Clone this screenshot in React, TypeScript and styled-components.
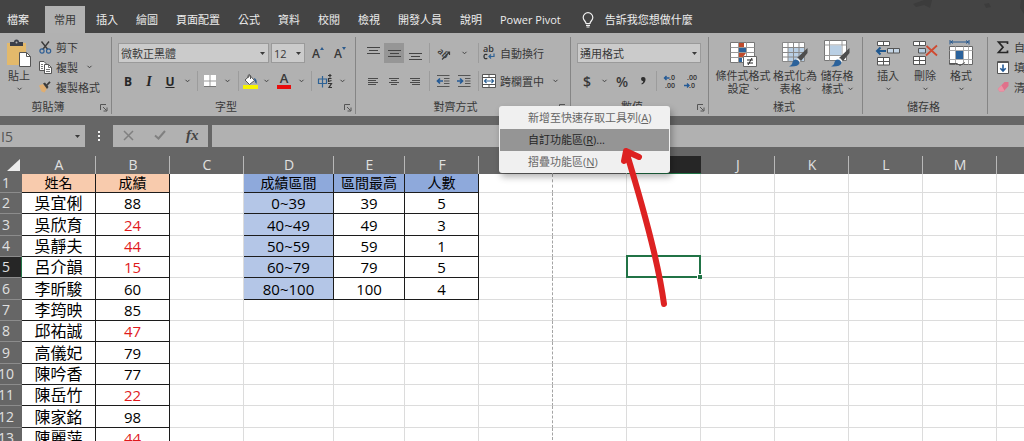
import React from "react";
import styled, { createGlobalStyle, css } from "styled-components";

const GlobalStyle = createGlobalStyle`
  *, *::before, *::after { box-sizing: border-box; }
  body { margin: 0; background: #fff; }
  button, input, select { font: inherit; color: inherit; margin: 0; padding: 0; border: 0; background: none; border-radius: 0; }
  body, button, input, select { font-family: "Open Sans", "Noto Sans CJK TC", sans-serif; }
  svg { display: block; flex: none; overflow: visible; }
`;

const GREEN = "#217346";

const Page = styled.div`
  height: 100vh;
  display: flex;
  flex-direction: column;
  overflow: hidden;
  position: relative;
  color: #383838;
  font-size: 11px;
  line-height: 13px;
`;

/* ---------- tab strip ---------- */
const TabStrip = styled.nav`
  flex: none;
  height: 33px;
  padding-top: 6px;
  background: #444;
  color: #ececec;
  display: flex;
  overflow: hidden;
`;
const Tab = styled.button<{ $active?: boolean }>`
  flex: none;
  height: 27px;
  padding: 0 9px;
  white-space: nowrap;
  ${(p) => p.$active && css`background: #b2b2b2; color: #383838; margin-right: 2px;`}
`;
const FileTab = styled(Tab)`
  padding: 0 16px 0 7px;
`;
const TellMe = styled.button`
  flex: none;
  display: flex;
  align-items: center;
  gap: 11px;
  margin-left: 12px;
  white-space: nowrap;
`;
const Doodle = styled.svg`
  margin: -6px 0 0 auto;
`;

/* ---------- ribbon ---------- */
const Ribbon = styled.div`
  flex: none;
  display: flex;
  padding: 4px 0 2px;
  background: #b1b1b1;
  overflow: hidden;
`;
const Group = styled.section<{ $w: number }>`
  flex: none;
  width: ${(p) => p.$w}px;
  border-right: 1px solid #858585;
`;
const GroupBody = styled.div<{ $left?: number }>`
  height: 62px;
  padding-left: ${(p) => p.$left ?? 0}px;
  display: flex;
`;
const Stack = styled(GroupBody)`
  flex-direction: column;
  padding-top: 6px;
  gap: 8px;
`;
const GroupFoot = styled.div`
  height: 15px;
  display: flex;
  align-items: center;
  padding-right: 3px;
`;
const GroupLabel = styled.span<{ $launch?: boolean }>`
  flex: 1;
  text-align: center;
  line-height: 15px;
  padding-right: ${(p) => (p.$launch ? 4 : 0)}px;
`;
const Launcher = styled.button`
  width: 8px;
  padding-top: 2px;
`;
const Row = styled.div`
  display: flex;
  align-items: center;
  height: 20px;
`;
const Tool = styled.button<{ $w: number; $on?: boolean }>`
  flex: none;
  width: ${(p) => p.$w}px;
  height: 20px;
  display: flex;
  align-items: center;
  justify-content: center;
  ${(p) => p.$on && css`background: #969696;`}
`;
const Letter = styled(Tool)<{ $italic?: boolean; $underline?: boolean }>`
  color: #262626;
  font-size: ${(p) => (p.$italic ? 14 : 12)}px;
  font-weight: 700;
  font-style: ${(p) => (p.$italic ? "italic" : "normal")};
  font-family: ${(p) => (p.$italic ? '"Liberation Serif", serif' : '"Open Sans", sans-serif')};
  text-decoration: ${(p) => (p.$underline ? "underline" : "none")};
`;
const Sign = styled(Tool)`
  font-size: 14px;
  font-weight: 600;
`;
const Divider = styled.span`
  flex: none;
  width: 1px;
  height: 20px;
  margin: 0 3px;
  background: #9c9c9c;
`;
const LabelTool = styled.button`
  flex: none;
  height: 20px;
  display: flex;
  align-items: center;
  gap: 4px;
  white-space: nowrap;
`;
const IconSlot = styled.span`
  width: 14px;
  display: flex;
  justify-content: center;
`;
const SmallColumn = styled.div`
  display: flex;
  flex-direction: column;
  align-items: flex-start;
`;
const BigTool = styled.button<{ $w: number }>`
  flex: none;
  width: ${(p) => p.$w}px;
  height: 60px;
  padding-top: 3px;
  display: flex;
  flex-direction: column;
  align-items: center;
  white-space: nowrap;
  & > svg { margin-bottom: 1px; }
`;
const BigLine = styled.span`
  height: 13px;
  display: flex;
  align-items: center;
  gap: 4px;
`;
const SelectBox = styled.span<{ $w: number }>`
  flex: none;
  width: ${(p) => p.$w}px;
  height: 20px;
  border: 1px solid #9a9a9a;
  background: #cbcbcb;
  display: grid;
  align-items: center;
  & > * { grid-area: 1 / 1; }
  & > svg { justify-self: end; margin-right: 3px; pointer-events: none; }
`;
const Select = styled.select`
  appearance: none;
  width: 100%;
  height: 18px;
  padding-left: 2px;
`;
const BoxRow = styled(Row)`
  gap: 2px;
`;

/* ---------- formula bar ---------- */
const FormulaBar = styled.div`
  flex: none;
  height: 32px;
  padding: 9px 0 1px;
  background: #666;
  display: flex;
`;
const NameBox = styled.div`
  flex: none;
  width: 85px;
  height: 22px;
  background: #b1b1b1;
  display: flex;
  align-items: center;
  justify-content: space-between;
  padding: 0 5px 0 1px;
`;
const NameInput = styled.input`
  width: 60px;
  font-size: 14px;
  color: #555;
`;
const Dots = styled.span`
  flex: none;
  width: 28px;
  display: flex;
  align-items: center;
  justify-content: center;
`;
const FormulaTools = styled.div`
  flex: none;
  width: 95px;
  height: 22px;
  margin-right: 4px;
  background: #b1b1b1;
  display: flex;
  justify-content: space-around;
`;
const FxTool = styled(Tool)`
  font: italic 700 15px "Liberation Serif", serif;
  color: #444;
`;
const FormulaInput = styled.input`
  flex: 1;
  min-width: 0;
  height: 22px;
  background: #b1b1b1;
`;

/* ---------- worksheet ---------- */
const Sheet = styled.div`
  flex: 1;
  min-height: 0;
  overflow: hidden;
`;
const Grid = styled.table`
  table-layout: fixed;
  width: 1072px;
  border-collapse: separate;
  border-spacing: 0;
  color: #000;
  font-size: 15px;
  line-height: 18px;
  text-align: center;
`;
const BodyRow = styled.tr`
  height: 21px;
  &:first-child { height: 18px; }
  &:nth-child(3n + 3) { height: 22px; }
`;
const ColHead = styled.th<{ $sel?: boolean }>`
  height: 26px;
  padding: 7px 0 0;
  background: #666;
  color: #e0e0e0;
  font-size: 14px;
  font-weight: 400;
  background-image: linear-gradient(#b8b8b8, #b8b8b8);
  background-size: 1px 18px;
  background-position: right bottom;
  background-repeat: no-repeat;
  ${(p) => p.$sel && css`
    background-image: linear-gradient(#262626, #262626);
    background-size: 100% 18px;
    box-shadow: inset 0 -1px ${GREEN};
  `}
`;
const Corner = styled.td`
  background: #666;
  padding: 0 2px 3px 7px;
  vertical-align: bottom;
`;
const RowHead = styled.th<{ $sel?: boolean }>`
  padding: 0 9px 0 0;
  background: ${(p) => (p.$sel ? "#262626" : "#666")};
  color: #e0e0e0;
  font-size: 14px;
  font-weight: 400;
  border-bottom: 1px solid #8c8c8c;
  border-right: 1px solid ${(p) => (p.$sel ? GREEN : "#666")};
  & > span { display: flex; justify-content: center; width: 12px; }
`;
type CellKind = "plain" | "box" | "name" | "fail" | "peach" | "blue" | "range";
const fills: Partial<Record<CellKind, string>> = { peach: "#f8cbad", blue: "#8ea9db", range: "#b4c6e7" };
const Cell = styled.td<{ $kind: CellKind; $dash?: boolean; $active?: boolean }>`
  padding: 0;
  white-space: nowrap;
  font-weight: 500;
  border-right: 1px ${(p) => (p.$dash ? "dashed #a4a4a4" : p.$kind === "plain" ? "solid #dcdcdc" : "solid #1c1c1c")};
  border-bottom: 1px solid ${(p) => (p.$kind === "plain" ? "#dcdcdc" : "#1c1c1c")};
  background: ${(p) => fills[p.$kind] ?? "#fff"};
  color: ${(p) => (p.$kind === "fail" ? "#e0191c" : "#000")};
  ${(p) => (p.$kind === "peach" || p.$kind === "blue") && css`font-size: 14px; line-height: 16px; font-weight: 400;`}
  ${(p) => p.$kind === "name" && css`font-size: 16px; font-weight: 400;`}
  ${(p) => p.$active && css`
    position: relative;
    &::before { content: ""; position: absolute; inset: -2px -1px -1px -1px; border: 2px solid ${GREEN}; }
    &::after { content: ""; position: absolute; right: -2px; bottom: -2px; width: 5px; height: 5px; background: ${GREEN}; border: solid #fff; border-width: 1px 0 0 1px; }
  `}
`;

/* ---------- context menu ---------- */
const Menu = styled.div`
  position: absolute;
  left: 499px;
  top: 106px;
  width: 171px;
  padding: 1px 1px 0;
  background: #f0f0f0;
  border-radius: 3px;
  box-shadow: 2px 4px 7px rgba(0, 0, 0, 0.3);
`;
const MenuItem = styled.button<{ $hot?: boolean }>`
  display: block;
  width: 100%;
  height: 22px;
  padding: 0 0 1px 28px;
  text-align: left;
  white-space: nowrap;
  color: ${(p) => (p.$hot ? "#262626" : "#666")};
  background: ${(p) => (p.$hot ? "#959595" : "transparent")};
`;
const Pointer = styled.svg`
  position: absolute;
  left: 616px;
  top: 142px;
`;

/* ---------- icons ---------- */
const Chevron = () => (
  <svg width="5" height="4" viewBox="0 0 5 4"><path d="M.5 .8 2.5 2.8 4.5 .8" fill="none" stroke="#444" /></svg>
);
const Triangle = () => (
  <svg width="5" height="3" viewBox="0 0 5 3"><path d="M0 0H5L2.5 3Z" fill="#3a3a3a" /></svg>
);
const Launch = () => (
  <svg width="8" height="8" viewBox="0 0 8 8" fill="none" stroke="#555"><path d="M.5 6V.5H6M3 3 6.5 6.5M7 3.5V7H3.5" /></svg>
);
const Bulb = () => (
  <svg width="12" height="16" viewBox="0 0 12 16" fill="none" stroke="#f0f0f0" strokeWidth="1.2">
    <path d="M4 11.5C4 9.300 1.200 8.500 1.200 5.500A4.700 4.700 0 0 1 10.800 5.500C10.800 8.500 8 9.300 8 11.500ZM4 13.300H8M4.500 15H7.500" />
  </svg>
);
const PasteIcon = () => (
  <svg width="26" height="28" viewBox="0 0 26 28">
    <rect x="1" y="3" width="19" height="22" fill="#e3b96b" />
    <path d="M4 6V2H8A2.500 2.500 0 0 1 13 2H17V6Z" fill="#3b3f4a" />
    <circle cx="10.500" cy="2.500" r="1" fill="#b1b1b1" />
    <path d="M13.500 12.500H20.500L24.500 16.500V26.500H13.500Z" fill="#fff" stroke="#555" />
    <path d="M20.500 12.500V16.500H24.500" fill="none" stroke="#555" />
  </svg>
);
const CutIcon = () => (
  <svg width="13" height="13" viewBox="0 0 13 13" fill="none">
    <path d="M2.500 .5 8.800 8.500M10 .5 3.700 8.500" stroke="#3b3b3b" strokeWidth="1.400" />
    <circle cx="3" cy="10" r="2.100" stroke="#2f5f95" strokeWidth="1.200" /><circle cx="9.600" cy="10" r="2.100" stroke="#2f5f95" strokeWidth="1.200" />
  </svg>
);
const CopyIcon = () => (
  <svg width="13" height="13" viewBox="0 0 13 13" fill="#fff" stroke="#555">
    <path d="M.5 .5H5L7.500 3V9.500H.5Z" /><path d="M5.500 3.500H9.500L12.500 6.500V12.500H5.500Z" />
    <path d="M9.500 3.500V6.500H12.500M7 8.500H11M7 10.500H11M2 3.500H4M2 5.500H4M2 7.500H4" fill="none" strokeWidth=".8" />
  </svg>
);
const PainterIcon = () => (
  <svg width="12" height="12" viewBox="0 0 12 12">
    <path d="M0 4.500 4 3 8 7.500 5.500 11.500 2.500 10.500Z" fill="#dfae72" />
    <path d="M4 2.500 6 1.500 9.500 6 8 8Z" fill="#3b3b3b" /><path d="M7.500 4.500 11 .8" stroke="#3b3b3b" strokeWidth="1.800" />
  </svg>
);
const BordersIcon = () => (
  <svg width="12" height="12" viewBox="0 0 12 12"><path d="M0 0H12V12H0Z" fill="#fff" /><path d="M6 0V12M0 6H12" stroke="#999" /><path d="M0 11.500H12" stroke="#777" /></svg>
);
const FillIcon = () => (
  <svg width="15" height="15" viewBox="0 0 15 15">
    <path d="M2 6 7 1.500 11.500 6.500 6.500 10.500Z" fill="#fff" stroke="#555" /><path d="M5 4V1.500Q6.500-.5 7.500 1.500V5" fill="none" stroke="#555" />
    <path d="M11 4Q14.500 5 13.500 10 12 8.500 11.500 6.500Z" fill="#2d5b8c" /><rect y="11" width="15" height="4" fill="#f8f400" />
  </svg>
);
const FontColorMark = styled.span`
  width: 14px;
  height: 16px;
  border-bottom: 4px solid #e80c0c;
  font-size: 13px;
  font-weight: 600;
  line-height: 11px;
`;
const SizeMark = styled.span`
  font-size: 12px;
  font-weight: 600;
  display: flex;
  align-items: center;
  & > svg { margin-top: -10px; }
`;
const Caret = ({ down }: { down?: boolean }) => (
  <svg width="4" height="3" viewBox="0 0 4 3"><path d={down ? "M0 0H4L2 3Z" : "M0 3H4L2 0Z"} fill="#2d5b8c" /></svg>
);
const PhoneticIcon = () => (
  <svg width="15" height="15" viewBox="0 0 15 15" fill="none">
    <path d="M.5 5H8.500V9.500H.5ZM4.500 2V13.500" stroke="#2d6296" strokeWidth="1.200" />
    <path d="M10 1.500H13.500M12 0V3.500M10 4.500H13.500M10.500 4V7.500L13.500 6.500M10 9.500H13.500L11 13.500H14" stroke="#333" strokeWidth="1.200" />
  </svg>
);
const insets = [0, 2, 0, 2];
const ParaIcon = ({ kind }: { kind: "left" | "center" | "right" }) => (
  <svg width="12" height="9" viewBox="0 0 12 9" stroke="#4a4a4a">
    {insets.map((inset, i) => {
      const from = kind === "left" ? 1 : 1 + inset;
      const to = kind === "right" ? 11 : 11 - inset;
      return <path key={i} d={`M${from} ${i * 2 + 1.5}H${to}`} />;
    })}
  </svg>
);
const VAlignIcon = ({ y }: { y: number }) => (
  <svg width="13" height="18" viewBox="0 0 13 18" stroke="#444"><path d={`M0 ${y + 0.5}H13M2 ${y + 3.5}H11M0 ${y + 6.5}H13`} /></svg>
);
const RotateIcon = () => (
  <svg width="15" height="14" viewBox="0 0 15 14" fill="none" stroke="#3a3a3a">
    <text x="1" y="6" fontSize="9" fontWeight="600" stroke="none" fill="#3a3a3a" transform="rotate(42 1 6)">ab</text>
    <path d="M6 13.500 13.500 6M13.500 9V6H10.500" strokeWidth="1.200" />
  </svg>
);
const WrapIcon = () => (
  <svg width="12" height="14" viewBox="0 0 12 14" fill="none">
    <text x="0" y="6" fontSize="9" fontWeight="600" fill="#333">ab</text>
    <path d="M4.300 8.700Q1 7.500 1 10.500T4.300 12.400" stroke="#333" strokeWidth="1.300" />
    <path d="M11 7.500V10.500H6M8 8.500 6 10.500 8 12.500" stroke="#2d6296" strokeWidth="1.200" />
  </svg>
);
const MergeIcon = () => (
  <svg width="14" height="14" viewBox="0 0 14 14"><path d="M.5 .5H13.500V13.500H.5ZM.5 3.500H13.500M.5 10.500H13.500M7 .5V3.500M7 10.500V13.500" fill="#fff" stroke="#555" /><path d="M2.500 7H11.500M4.500 5 2.500 7 4.500 9M9.500 5 11.500 7 9.500 9" fill="none" stroke="#2d6296" strokeWidth="1.200" /></svg>
);
const IndentIcon = ({ out }: { out?: boolean }) => (
  <svg width="14" height="12" viewBox="0 0 14 12" fill="none">
    <path d="M1 .5H13.500M8 3.500H13.500M8 6H13.500M8 8.500H13.500M1 11.500H13.500" stroke="#555" />
    <path d={out ? "M7 6H1.500M4 3.500 1.500 6 4 8.500" : "M0 6H5.500M3 3.500 5.500 6 3 8.500"} stroke="#245a96" strokeWidth="1.700" />
  </svg>
);
const DecimalIcon = ({ more }: { more?: boolean }) => (
  <svg width="12" height="13" viewBox="0 0 12 13">
    <text x={more ? 5 : 3} y="5" fontSize="7" fontWeight="600" fill="#333">{more ? ".0" : ".00"}</text>
    <text x={more ? 1 : 5} y="13" fontSize="7" fontWeight="600" fill="#333">{more ? ".00" : ".0"}</text>
    <path d={more ? "M5.500 3H.5M2.500 1 .5 3 2.500 5" : "M0 10.500H5M3 8.500 5 10.500 3 12.500"} fill="none" stroke="#245a96" strokeWidth="1.400" />
  </svg>
);
const CommaIcon = () => (
  <svg width="5" height="8" viewBox="0 0 5 8"><path d="M0 2A2 2 0 0 1 2.200 0Q4.800 .2 4.500 3 4 6.300 .8 7.500L.4 6.600Q2 5.800 2.300 4.200 0 4 0 2Z" fill="#2e2e2e" /></svg>
);
const CondIcon = () => (
  <svg width="28" height="28" viewBox="0 0 28 28">
    <path d="M1.500 2.500H25.500V22.500H1.500Z" fill="#fff" stroke="#777" /><path d="M1.500 7.500H25.500M1.500 12.500H25.500M1.500 17.500H25.500M9.500 2.500V22.500M17.500 2.500V22.500" stroke="#999" />
    <path d="M10 3H15V7H10ZM10 13H17L14 17H10Z" fill="#bf4b2c" /><path d="M10 8H17V12H10ZM10 18H13V22H10Z" fill="#2b629b" />
    <path d="M14.500 16.500H27.500V26.500H14.500Z" fill="#fff" stroke="#666" /><path d="M18 20H24M18 23H24M23 18 19 25" stroke="#222" />
  </svg>
);
const Brush = () => (
  <>
    <path d="M26.500 8 26.500 13 20 21 16 18Z" fill="#4d4d4d" /><path d="M17 18 19.500 21 18 22.500 14.500 20Z" fill="#eee" />
    <path d="M14 19.500Q18 19.500 18.500 23 17.500 27 8 26.500 11.500 24.500 11.500 22 12 20 14 19.500Z" fill="#2b629b" />
  </>
);
const TableStyleIcon = () => (
  <svg width="28" height="28" viewBox="0 0 28 28">
    <path d="M1.500 2.500H23.500V21.500H1.500Z" fill="#fff" /><path d="M7 7.500H23.500V21.500H7Z" fill="#b9cfe4" />
    <path d="M1.500 2.500H23.500V21.500H1.500ZM1.500 7.500H23.500M1.500 12.500H23.500M1.500 17H23.500M7 2.500V21.500M12.500 2.500V21.500M18 2.500V21.500" fill="none" stroke="#888" /><Brush />
  </svg>
);
const CellStyleIcon = () => (
  <svg width="28" height="28" viewBox="0 0 28 28">
    <path d="M1.500 .5H23.500V20.500H1.500Z" fill="#fff" stroke="#777" /><path d="M6.500 .5V20.500M19 .5V20.500M1.500 5H23.500M1.500 15.500H23.500" stroke="#999" />
    <path d="M7 5.500H18.500V15H7Z" fill="#b9cfe4" /><Brush />
  </svg>
);
const InsertIcon = () => (
  <svg width="26" height="28" viewBox="0 0 26 28" stroke="#555">
    <path d="M2.500 1.500H14.500V5.500H2.500ZM8.500 1.500V5.500M2.500 17.500H14.500V25H2.500ZM8.500 17.500V25M2.500 21.500H14.500" fill="#fff" /><path d="M12.500 8.500H24.500V13H12.500ZM18.500 8.500V13" fill="#c5d6e6" />
    <path d="M11 11H2M5.500 7.500 2 11 5.500 14.500" fill="none" stroke="#1f5890" strokeWidth="2" />
  </svg>
);
const DeleteIcon = () => (
  <svg width="26" height="28" viewBox="0 0 26 28" stroke="#555">
    <path d="M1.500 1.500H13.500V5.500H1.500ZM7.500 1.500V5.500M1.500 16.500H13.500V24.500H1.500ZM7.500 16.500V24.500M1.500 20.500H13.500" fill="#fff" /><path d="M6.500 8.500H13.500V13H6.500Z" fill="#b9cfe4" />
    <path d="M14.500 6 25 15.500M25 5.500 14 15.500" fill="none" stroke="#cf4a31" strokeWidth="1.800" />
  </svg>
);
const FormatIcon = () => (
  <svg width="26" height="28" viewBox="0 0 26 28">
    <path d="M2 2H21M2 0V4.500M21 0V4.500M5 .5 3 2 5 3.500M18 .5 20 2 18 3.500" fill="none" stroke="#24578d" />
    <path d="M1.500 6.500H24.500V24.500H1.500Z" fill="#fff" stroke="#666" /><path d="M1.500 10.500H24.500M1.500 19.500H24.500M7.500 6.500V24.500M15.500 6.500V24.500M20.500 6.500V24.500" stroke="#aaa" />
    <path d="M8 11H15V19H8Z" fill="#2b629b" /><path d="M1 23.500H9L12 25.500 17 22.500" fill="none" stroke="#555" />
  </svg>
);
const SumIcon = () => (
  <svg width="12" height="13" viewBox="0 0 12 13"><path d="M10.500 3V1H1.500L6 6.300 1.500 11.500H10.500V9.500" fill="none" stroke="#262626" strokeWidth="1.700" /></svg>
);
const FillDownIcon = () => (
  <svg width="12" height="13" viewBox="0 0 12 13"><path d="M.5 .5H11.500V12.500H.5Z" fill="#fff" stroke="#555" /><path d="M0 1.500H12" stroke="#555" /><path d="M6 3.500V10M3.300 7.300 6 10 8.700 7.300" fill="none" stroke="#245a96" strokeWidth="1.600" /></svg>
);
const EraserIcon = () => (
  <svg width="12" height="12" viewBox="0 0 12 12"><path d="M7.500 1H11.500V5L6.500 10.500H2.500L.8 8Z" fill="#e0708a" /><path d="M.8 8 4.500 4.300 7.500 9.500 6.500 10.500H2.500Z" fill="#ea93a5" /></svg>
);

/* ---------- data ---------- */
const tabsBefore = ["插入", "繪圖", "頁面配置", "公式", "資料", "校閱", "檢視", "開發人員", "說明", "Power Pivot"];
const columns = ["A", "B", "C", "D", "E", "F", "G", "H", "I", "J", "K", "L", "M", "N"];
const columnWidths = [74, 74, 74, 90, 71, 74, 74, 74, 74, 74, 74, 74, 74, 75];
const students: [string, number][] = [
  ["吳宜俐", 88], ["吳欣育", 24], ["吳靜夫", 44], ["呂介韻", 15], ["李昕駿", 60], ["李筠映", 85],
  ["邱祐誠", 47], ["高儀妃", 79], ["陳吟香", 77], ["陳岳竹", 22], ["陳家銘", 98], ["陳麗萍", 44],
];
const bands = [["0~39", "39", "5"], ["40~49", "49", "3"], ["50~59", "59", "1"], ["60~79", "79", "5"], ["80~100", "100", "4"]];

function cellAt(row: number, col: number): { kind: CellKind; text?: string | number } {
  if (row === 1) {
    if (col < 2) return { kind: "peach", text: ["姓名", "成績"][col] };
    if (col > 2 && col < 6) return { kind: "blue", text: ["成績區間", "區間最高", "人數"][col - 3] };
    return { kind: "plain" };
  }
  const student = students[row - 2];
  if (col === 0) return { kind: "name", text: student[0] };
  if (col === 1) return { kind: student[1] < 60 ? "fail" : "box", text: student[1] };
  if (col > 2 && col < 6 && row < 7) return { kind: col === 3 ? "range" : "box", text: bands[row - 2][col - 3] };
  return { kind: "plain" };
}

const More = ({ w, label }: { w: number; label: string }) => (
  <Tool $w={w} aria-label={label}><Chevron /></Tool>
);
const Foot = ({ label, launch }: { label: string; launch?: boolean }) => (
  <GroupFoot>
    <GroupLabel $launch={launch}>{label}</GroupLabel>
    {launch && <Launcher aria-label={`${label}設定`}><Launch /></Launcher>}
  </GroupFoot>
);
const Big = ({ w, icon, lines }: { w: number; icon: React.ReactNode; lines: [string, string] }) => (
  <BigTool $w={w}>
    {icon}
    <BigLine>{lines[0]}</BigLine>
    <BigLine>{lines[1]}<Chevron /></BigLine>
  </BigTool>
);
const MoreSlot = styled.span`
  padding-left: 5px;
`;
const Labelled = ({ icon, text, more }: { icon: React.ReactNode; text: string; more?: boolean }) => (
  <LabelTool><IconSlot>{icon}</IconSlot>{text}{more && <MoreSlot><Chevron /></MoreSlot>}</LabelTool>
);

export default function App() {
  return (
    <Page>
      <GlobalStyle />
      <TabStrip>
        <FileTab>檔案</FileTab>
        <Tab $active>常用</Tab>
        {tabsBefore.map((t) => <Tab key={t}>{t}</Tab>)}
        <TellMe><Bulb />告訴我您想做什麼</TellMe>
        <Doodle width="120" height="14" viewBox="0 0 120 14" fill="#3c3c3c">
          <path d="M9 4 20 0H28L26 8 20 5 12 7ZM80 4 85 3 87 7 82 8ZM117 0H120V14L116 8Z" />
        </Doodle>
      </TabStrip>

      <Ribbon>
        <Group $w={112}>
          <GroupBody>
            <BigTool $w={38}>
              <PasteIcon />
              <BigLine>貼上</BigLine>
              <BigLine><Chevron /></BigLine>
            </BigTool>
            <SmallColumn>
              <Labelled icon={<CutIcon />} text="剪下" />
              <Labelled icon={<CopyIcon />} text="複製" more />
              <Labelled icon={<PainterIcon />} text="複製格式" />
            </SmallColumn>
          </GroupBody>
          <Foot label="剪貼簿" launch />
        </Group>

        <Group $w={244}>
          <Stack $left={6}>
            <BoxRow>
              <SelectBox $w={151}>
                <Select aria-label="字型"><option>微軟正黑體</option></Select><Triangle />
              </SelectBox>
              <SelectBox $w={34}>
                <Select aria-label="字型大小"><option>12</option></Select><Triangle />
              </SelectBox>
              <Tool $w={22} aria-label="放大字型"><SizeMark>A<Caret /></SizeMark></Tool>
              <Tool $w={18} aria-label="縮小字型"><SizeMark>A<Caret down /></SizeMark></Tool>
            </BoxRow>
            <Row>
              <Letter $w={20}>B</Letter>
              <Letter $w={22} $italic>I</Letter>
              <Letter $w={20} $underline>U</Letter>
              <More w={14} label="底線樣式" />
              <Divider />
              <Tool $w={18} aria-label="框線"><BordersIcon /></Tool>
              <More w={16} label="框線樣式" />
              <Divider />
              <Tool $w={16} aria-label="填滿色彩"><FillIcon /></Tool>
              <More w={16} label="其他填滿色彩" />
              <Tool $w={20}><FontColorMark>A</FontColorMark></Tool>
              <More w={14} label="其他字型色彩" />
              <Divider />
              <Tool $w={20} aria-label="注音標示"><PhoneticIcon /></Tool>
              <More w={14} label="注音設定" />
            </Row>
          </Stack>
          <Foot label="字型" launch />
        </Group>

        <Group $w={215}>
          <Stack $left={6}>
            <Row>
              <Tool $w={22} aria-label="靠上對齊"><VAlignIcon y={3} /></Tool>
              <Tool $w={20} $on aria-label="置中對齊"><VAlignIcon y={6} /></Tool>
              <Tool $w={22} aria-label="靠下對齊"><VAlignIcon y={9} /></Tool>
              <Divider />
              <Tool $w={20} aria-label="方向"><RotateIcon /></Tool>
              <More w={22} label="方向選項" />
              <Divider />
              <Labelled icon={<WrapIcon />} text="自動換行" />
            </Row>
            <Row>
              <Tool $w={22} aria-label="靠左對齊"><ParaIcon kind="left" /></Tool>
              <Tool $w={20} aria-label="置中"><ParaIcon kind="center" /></Tool>
              <Tool $w={22} aria-label="靠右對齊"><ParaIcon kind="right" /></Tool>
              <Divider />
              <Tool $w={20} aria-label="減少縮排"><IndentIcon out /></Tool>
              <Tool $w={22} aria-label="增加縮排"><IndentIcon /></Tool>
              <Divider />
              <Labelled icon={<MergeIcon />} text="跨欄置中" more />
            </Row>
          </Stack>
          <Foot label="對齊方式" launch />
        </Group>

        <Group $w={138}>
          <Stack $left={6}>
            <BoxRow>
              <SelectBox $w={124}>
                <Select aria-label="數值格式"><option>通用格式</option></Select><Triangle />
              </SelectBox>
            </BoxRow>
            <Row>
              <Sign $w={20}>$</Sign>
              <More w={14} label="會計格式" />
              <Sign $w={22}>%</Sign>
              <Tool $w={20} aria-label="千分位樣式"><CommaIcon /></Tool>
              <Divider />
              <Tool $w={20} aria-label="增加小數位數"><DecimalIcon more /></Tool>
              <Tool $w={20} aria-label="減少小數位數"><DecimalIcon /></Tool>
            </Row>
          </Stack>
          <Foot label="數值" launch />
        </Group>

        <Group $w={154}>
          <GroupBody $left={6}>
            <Big w={56} icon={<CondIcon />} lines={["條件式格式", "設定"]} />
            <Big w={48} icon={<TableStyleIcon />} lines={["格式化為", "表格"]} />
            <Big w={36} icon={<CellStyleIcon />} lines={["儲存格", "樣式"]} />
          </GroupBody>
          <Foot label="樣式" />
        </Group>

        <Group $w={125}>
          <GroupBody $left={6}>
            <Big w={38} icon={<InsertIcon />} lines={["插入", ""]} />
            <Big w={36} icon={<DeleteIcon />} lines={["刪除", ""]} />
            <Big w={36} icon={<FormatIcon />} lines={["格式", ""]} />
          </GroupBody>
          <Foot label="儲存格" />
        </Group>

        <Group $w={112}>
          <GroupBody $left={8}>
            <SmallColumn>
              <Labelled icon={<SumIcon />} text="自動加總" more />
              <Labelled icon={<FillDownIcon />} text="填滿" more />
              <Labelled icon={<EraserIcon />} text="清除" more />
            </SmallColumn>
          </GroupBody>
        </Group>
      </Ribbon>

      <FormulaBar>
        <NameBox>
          <NameInput aria-label="名稱方塊" defaultValue="I5" />
          <Triangle />
        </NameBox>
        <Dots>
          <svg width="2" height="12" viewBox="0 0 2 12" fill="#f2f2f2"><path d="M0 1H2V3H0ZM0 5H2V7H0ZM0 9H2V11H0Z" /></svg>
        </Dots>
        <FormulaTools>
          <Tool $w={20} aria-label="取消"><svg width="11" height="11" viewBox="0 0 11 11"><path d="M1 1 10 10M10 1 1 10" stroke="#808080" strokeWidth="1.500" /></svg></Tool>
          <Tool $w={20} aria-label="輸入"><svg width="12" height="10" viewBox="0 0 12 10"><path d="M1 5.500 4.500 8.500 11 1" fill="none" stroke="#808080" strokeWidth="2" /></svg></Tool>
          <FxTool $w={20}>fx</FxTool>
        </FormulaTools>
        <FormulaInput aria-label="資料編輯列" />
      </FormulaBar>

      <Sheet>
        <Grid>
          <colgroup>
            <col width={22} />
            {columnWidths.map((w, i) => <col key={i} width={w} />)}
          </colgroup>
          <thead>
            <tr>
              <Corner><svg width="13" height="12" viewBox="0 0 13 12"><path d="M13 0V12H0Z" fill="#ececec" /></svg></Corner>
              {columns.map((c) => <ColHead key={c} scope="col" $sel={c === "I"}>{c}</ColHead>)}
            </tr>
          </thead>
          <tbody>
            {Array.from({ length: 13 }, (_, i) => i + 1).map((row) => (
              <BodyRow key={row}>
                <RowHead scope="row" $sel={row === 5}><span>{row}</span></RowHead>
                {columns.map((c, col) => {
                  const { kind, text } = cellAt(row, col);
                  return <Cell key={c} $kind={kind} $dash={c === "G"} $active={c === "I" && row === 5}>{text}</Cell>;
                })}
              </BodyRow>
            ))}
          </tbody>
        </Grid>
      </Sheet>

      <Menu role="menu">
        <MenuItem role="menuitem">新增至快速存取工具列(<u>A</u>)</MenuItem>
        <MenuItem role="menuitem" $hot>自訂功能區(<u>R</u>)...</MenuItem>
        <MenuItem role="menuitem">摺疊功能區(<u>N</u>)</MenuItem>
      </Menu>
      <Pointer width="56" height="172" viewBox="0 0 56 172" fill="none" stroke="#dd2222" strokeWidth="6" strokeLinecap="round" strokeLinejoin="round" aria-hidden="true">
        <path d="M10 9Q28 68 38 110 45 140 48 162M8 19 10 9 23 15" />
      </Pointer>
    </Page>
  );
}
